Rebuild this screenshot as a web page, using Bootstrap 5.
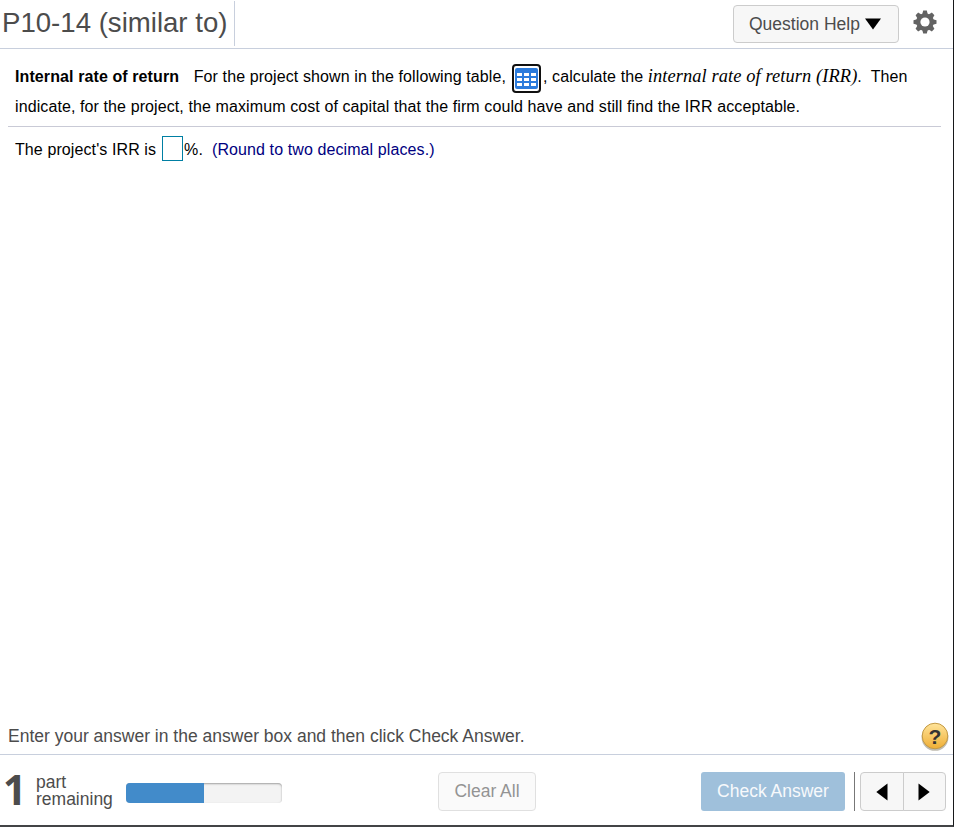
<!DOCTYPE html>
<html lang="en">
<head>
    <meta charset="UTF-8">
    <meta name="viewport" content="width=device-width, initial-scale=1.0">
    <title>P10-14 (similar to)</title>
    <link href="https://cdn.jsdelivr.net/npm/bootstrap@5.3.1/dist/css/bootstrap.min.css" rel="stylesheet">
    <script src="https://cdn.jsdelivr.net/npm/bootstrap@5.3.1/dist/js/bootstrap.bundle.min.js"></script>
    <style>
        body { font-family: "Liberation Sans", Arial, sans-serif; color: #000; }
        .player { height: 827px; border-right: 1px solid #17181a; border-bottom: 2px solid #434446; }
        .topbar { height: 49px; border-bottom: 1px solid #c8cfdd; }
        .topbar h1 { font-size: 27.6px; line-height: 44px; color: #4c4c4c; width: 235px; height: 45px; margin-top: 1px; padding-left: 2px; border-right: 1px solid #c8cfdd; white-space: nowrap; }
        .grey-btn { background: #f7f7f7; border: 1px solid #ccc; border-radius: 4px; color: #4c4c4c; font-size: 17.5px; }
        .help-btn { width: 166px; height: 38px; margin: 5px 14px 0 0; padding: 0 0 0 15px; }
        .gear { margin: 10px 16px 0 0; }
        .question { padding: 12px 12px 0 8px; font-size: 16px; letter-spacing: .1px; white-space: nowrap; }
        .prompt { line-height: 30px; padding: 1px 0 0 7px; height: 66px; border-bottom: 1px solid #c9cad6; }
        .prompt-line { height: 30px; }
        .intro { margin-left: 1px; }
        .term { font-family: "Liberation Serif", "Times New Roman", serif; font-size: 18.4px; line-height: 1; }
        .table-btn { width: 29px; height: 29px; border: 2px solid #101010; border-radius: 4px; background: #fff; margin: 3px 2px 0 6px; }
        .answer { padding: 10px 0 0 7px; height: 36px; }
        .answer-box { width: 21px; height: 25px; border: 1px solid #007fa3; border-radius: 0; padding: 0; margin: 0 1px 4px 6px; }
        .round-note { color: #00007f; margin-left: 9px; }
        .hint { font-size: 17.5px; color: #4c4c4c; height: 38px; padding-left: 8px; line-height: 40px; }
        .help-badge { margin-top: 4px; }
        .bottombar { height: 71px; border-top: 1px solid #c8cfdd; }
        .parts-count { font-family: "Open Sans", "Liberation Sans", sans-serif; font-size: 41px; font-weight: bold; line-height: 40px; color: #4c4c4c; width: 33px; padding-left: 3px; margin-top: 14px; }
        .parts-label { font-size: 17.5px; line-height: 17px; color: #4c4c4c; width: 90px; margin: 19px 0 0 3px; }
        .parts-bar { width: 156px; height: 20px; margin-top: 28px; background: #f3f3f3; border-radius: 4px; box-shadow: inset 0 1px 2px rgba(0,0,0,.35); }
        .parts-bar .progress-bar { background: #428bca; }
        .clear-btn { width: 98px; height: 39px; margin: 17px 0 0 156px; opacity: .6; padding: 0; }
        .check-btn { width: 144px; height: 39px; margin: 17px 0 0 165px; background: #9fc0db; border: 0; border-radius: 3px; color: #f7f9fb; font-size: 17.5px; padding: 0; }
        .divider { width: 1px; height: 39px; margin: 17px 5px 0 9px; background: #777; }
        .nav-pair { width: 86px; height: 39px; margin-top: 17px; }
        .nav-pair .grey-btn { padding: 0 0 2px; }
    </style>
</head>
<body>
    <div class="player d-flex flex-column">
        <header class="topbar d-flex align-items-start">
            <h1 class="mb-0 fw-normal">P10-14 (similar to)</h1>
            <button type="button" class="btn grey-btn help-btn ms-auto d-flex align-items-center">
                <span>Question Help</span>
                <svg class="ms-1" width="18" height="12" viewBox="0 0 18 12"><path d="M1 0.5h16l-8 11z"/></svg>
            </button>
            <svg class="gear" width="24" height="24" viewBox="0 0 24 24">
                <g fill="#636363">
                    <path id="tooth" d="M9 5 10.2.5h3.6L15 5v14l-1.2 4.5h-3.6L9 19z"/>
                    <use href="#tooth" transform="rotate(45 12 12)"/>
                    <use href="#tooth" transform="rotate(90 12 12)"/>
                    <use href="#tooth" transform="rotate(135 12 12)"/>
                    <circle cx="12" cy="12" r="8.8"/>
                </g>
                <circle cx="12" cy="12" r="4.6" fill="#fff"/>
            </svg>
        </header>

        <main class="question flex-grow-1">
            <div class="prompt">
                <div class="prompt-line d-flex align-items-center">
                    <b>Internal rate of return</b>
                    <span class="intro">&nbsp;&nbsp; For the project shown in the following table,</span>
                    <button type="button" class="table-btn p-0 d-flex align-items-center justify-content-center" aria-label="Table">
                        <svg width="23" height="21" viewBox="0 0 23 21">
                            <rect width="23" height="21" rx="2" fill="#2b7bdc"/>
                            <g fill="#fff">
                                <path d="M2 5h5v3H2zM9 5h5v3H9zM16 5h5v3h-5z"/>
                                <path d="M2 10h5v3H2zM9 10h5v3H9zM16 10h5v3h-5z"/>
                                <path d="M2 15h5v3H2zM9 15h5v3H9zM16 15h5v3h-5z"/>
                            </g>
                        </svg>
                    </button>
                    <span>, calculate the <i class="term">internal rate of return (IRR)</i>.&nbsp; Then</span>
                </div>
                <div>indicate, for the project, the maximum cost of capital that the firm could have and still find the IRR acceptable.</div>
            </div>
            <div class="answer d-flex align-items-center">
                <span>The project's IRR is</span>
                <input type="text" class="answer-box" aria-label="IRR">
                <span>%.</span>
                <span class="round-note">(Round to two decimal places.)</span>
            </div>
        </main>

        <div class="hint d-flex">
            <span>Enter your answer in the answer box and then click Check Answer.</span>
            <svg class="help-badge ms-auto me-1" width="28" height="32" viewBox="0 0 28 32">
                <defs>
                    <linearGradient id="gold" x1="0" y1="0" x2="0" y2="1">
                        <stop offset="0" stop-color="#ffe49a"/>
                        <stop offset="1" stop-color="#efae35"/>
                    </linearGradient>
                </defs>
                <circle cx="14" cy="17.4" r="13.4" fill="#8a8370" opacity=".55"/>
                <circle cx="14" cy="16" r="12.8" fill="url(#gold)" stroke="#c49a45"/>
                <text x="14" y="23.5" text-anchor="middle" font-size="21" font-weight="bold" fill="#333">?</text>
            </svg>
        </div>

        <footer class="bottombar d-flex align-items-start">
            <div class="parts-count">1</div>
            <div class="parts-label">
                <div>part</div>
                <div>remaining</div>
            </div>
            <div class="progress parts-bar">
                <div class="progress-bar w-50"></div>
            </div>
            <button type="button" class="btn grey-btn clear-btn">Clear All</button>
            <button type="button" class="btn check-btn">Check Answer</button>
            <div class="divider"></div>
            <div class="btn-group nav-pair">
                <button type="button" class="btn grey-btn" aria-label="Previous">
                    <svg width="12" height="18" viewBox="0 0 12 18"><path d="M11.5 0.5v17L0.3 9z"/></svg>
                </button>
                <button type="button" class="btn grey-btn" aria-label="Next">
                    <svg width="12" height="18" viewBox="0 0 12 18"><path d="M0.5 0.5v17L11.7 9z"/></svg>
                </button>
            </div>
        </footer>
    </div>
</body>
</html>
